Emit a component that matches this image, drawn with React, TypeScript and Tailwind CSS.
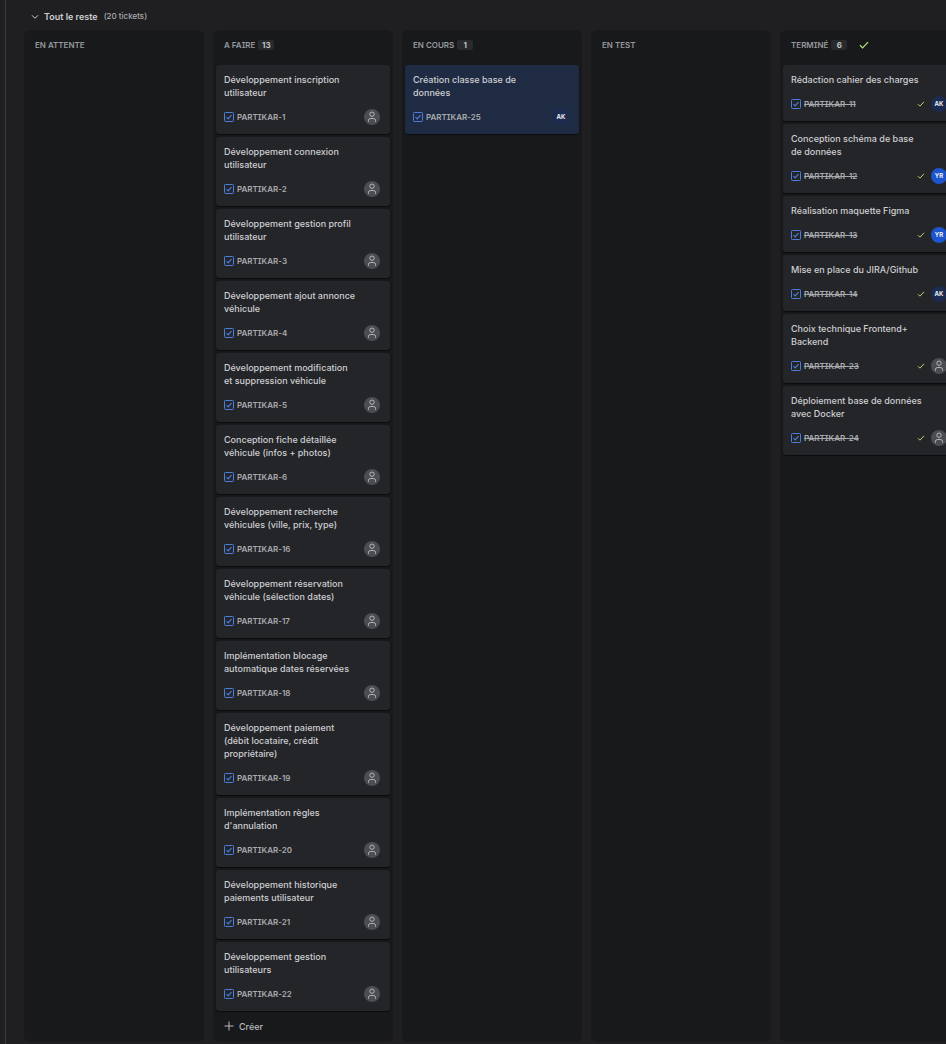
import React from "react";

type Ticket = {
  id: number;
  title: string;
  assignee?: "AK" | "YR";
  done?: boolean;
  selected?: boolean;
};

type Column = {
  name: string;
  tickets: Ticket[];
  complete?: boolean;
  canCreate?: boolean;
};

const columns: Column[] = [
  { name: "EN ATTENTE", tickets: [] },
  {
    name: "A FAIRE",
    canCreate: true,
    tickets: [
      { id: 1, title: "Développement inscription utilisateur" },
      { id: 2, title: "Développement connexion utilisateur" },
      { id: 3, title: "Développement gestion profil utilisateur" },
      { id: 4, title: "Développement ajout annonce véhicule" },
      { id: 5, title: "Développement modification et suppression véhicule" },
      { id: 6, title: "Conception fiche détaillée véhicule (infos + photos)" },
      { id: 16, title: "Développement recherche véhicules (ville, prix, type)" },
      { id: 17, title: "Développement réservation véhicule (sélection dates)" },
      { id: 18, title: "Implémentation blocage automatique dates réservées" },
      { id: 19, title: "Développement paiement (débit locataire, crédit propriétaire)" },
      { id: 20, title: "Implémentation règles d'annulation" },
      { id: 21, title: "Développement historique paiements utilisateur" },
      { id: 22, title: "Développement gestion utilisateurs" },
    ],
  },
  {
    name: "EN COURS",
    tickets: [{ id: 25, title: "Création classe base de données", assignee: "AK", selected: true }],
  },
  { name: "EN TEST", tickets: [] },
  {
    name: "TERMINÉ",
    complete: true,
    tickets: [
      { id: 11, title: "Rédaction cahier des charges", assignee: "AK", done: true },
      { id: 12, title: "Conception schéma de base de données", assignee: "YR", done: true },
      { id: 13, title: "Réalisation maquette Figma", assignee: "YR", done: true },
      { id: 14, title: "Mise en place du JIRA/Github", assignee: "AK", done: true },
      { id: 23, title: "Choix technique Frontend+ Backend", done: true },
      { id: 24, title: "Déploiement base de données avec Docker", done: true },
    ],
  },
];

function TaskIcon() {
  return (
    <svg viewBox="0 0 10 10" className="size-2.5 shrink-0 text-[#4c7fdb]" fill="none" stroke="currentColor" aria-hidden="true">
      <rect x="0.5" y="0.5" width="9" height="9" rx="0.8" />
      <path d="M2.5 5.1 4.2 6.8 7.5 3.1" strokeWidth="1.2" />
    </svg>
  );
}

function Check({ className }: { className: string }) {
  return (
    <svg viewBox="0 0 10 8" className={className} fill="none" stroke="currentColor" strokeWidth="1.3" aria-hidden="true">
      <path d="M1 4.3 3.6 6.9 9 1.1" />
    </svg>
  );
}

function Avatar({ who }: { who?: "AK" | "YR" }) {
  if (who) {
    return (
      <span
        className={`flex size-4 shrink-0 items-center justify-center rounded-full text-[6px] leading-none font-bold text-[#f0f1f3] ${
          who === "AK" ? "bg-[#1c2b4f]" : "bg-[#1d55cc]"
        }`}
      >
        {who}
      </span>
    );
  }
  return (
    <span className="flex size-4 shrink-0 items-center justify-center rounded-full bg-[#4b4d51] text-[#b5b7ba]">
      <svg viewBox="0 0 16 16" className="size-4" fill="none" stroke="currentColor" role="img" aria-label="Non assigné">
        <circle cx="8" cy="5.2" r="2.2" />
        <path d="M4.5 12.8V11.5a2 2 0 0 1 2-2h3a2 2 0 0 1 2 2v1.3" />
      </svg>
    </span>
  );
}

function Card({ ticket }: { ticket: Ticket }) {
  return (
    <li
      className={`rounded-[3px] px-2 pt-2 pb-[9px] shadow-[0_1px_1px_#0b0c0d] ${
        ticket.selected ? "bg-[#1f2b42]" : "bg-[#242528]"
      }`}
    >
      <h3 className="mr-6 text-[9px] leading-[13px] font-medium text-[#cecfd2]">{ticket.title}</h3>
      <div className="mt-2.5 flex h-4 items-center pr-0.5">
        <TaskIcon />
        <a
          href={`#PARTIKAR-${ticket.id}`}
          className={`ml-[3px] text-[8px] leading-3 font-semibold text-[#a9abaf] [font-feature-settings:'cv08'] ${
            ticket.done ? "line-through" : ""
          }`}
        >
          PARTIKAR-{ticket.id}
        </a>
        <span className="ml-auto flex items-center gap-1.5">
          {ticket.done && <Check className="h-1.5 w-2 text-[#b3df72]" />}
          <Avatar who={ticket.assignee} />
        </span>
      </div>
    </li>
  );
}

function BoardColumn({ column }: { column: Column }) {
  return (
    <section className="w-45 shrink-0 rounded-md bg-[#18191a] px-[3px] pb-2">
      <header className="flex h-[35px] items-center px-2 pb-1.5">
        <h2 className="text-[8px] leading-3 font-semibold text-[#96999e] [font-feature-settings:'cv08']">{column.name}</h2>
        {column.tickets.length > 0 && (
          <span className="ml-[3px] flex h-2.5 min-w-4 items-center justify-center rounded-[2px] bg-[#292a2d] px-[3px] text-[8px] leading-none font-bold text-[#c0c2c5]">
            {column.tickets.length}
          </span>
        )}
        {column.complete && <Check className="ml-3 h-2 w-2.5 text-[#b3df72]" />}
      </header>
      <ul className="flex flex-col gap-[3px]">
        {column.tickets.map((t) => (
          <Card key={t.id} ticket={t} />
        ))}
      </ul>
      {column.canCreate && (
        <button type="button" className="mt-[7px] flex h-4 items-center gap-[5px] pl-2 text-[9px] leading-[13px] font-medium text-[#b9bbbe]">
          <svg viewBox="0 0 10 10" className="size-2.5" fill="none" stroke="currentColor" aria-hidden="true">
            <path d="M5 0.5v9M0.5 5h9" />
          </svg>
          Créer
        </button>
      )}
    </section>
  );
}

export default function App() {
  return (
    <main className="min-h-screen overflow-hidden bg-[#1f1f21] pl-[5px] font-['Inter',sans-serif]">
      <div className="min-h-screen border-l border-[#3b3c3f] pl-[18px]">
        <button type="button" aria-expanded="true" className="flex h-[30px] items-center pt-[3px] pl-[7px] text-[#cecfd2]">
          <svg viewBox="0 0 8 8" className="size-2" fill="none" stroke="currentColor" aria-hidden="true">
            <path d="M1 2.3 4 5.3 7 2.3" />
          </svg>
          <span className="ml-[5px] text-[9px] leading-[13px] font-semibold">Tout le reste</span>
          <span className="ml-1.5 text-[8px] leading-[13px] font-medium text-[#a9abaf]">(20 tickets)</span>
        </button>
        <div className="flex gap-[9px]">
          {columns.map((c) => (
            <BoardColumn key={c.name} column={c} />
          ))}
        </div>
      </div>
    </main>
  );
}
